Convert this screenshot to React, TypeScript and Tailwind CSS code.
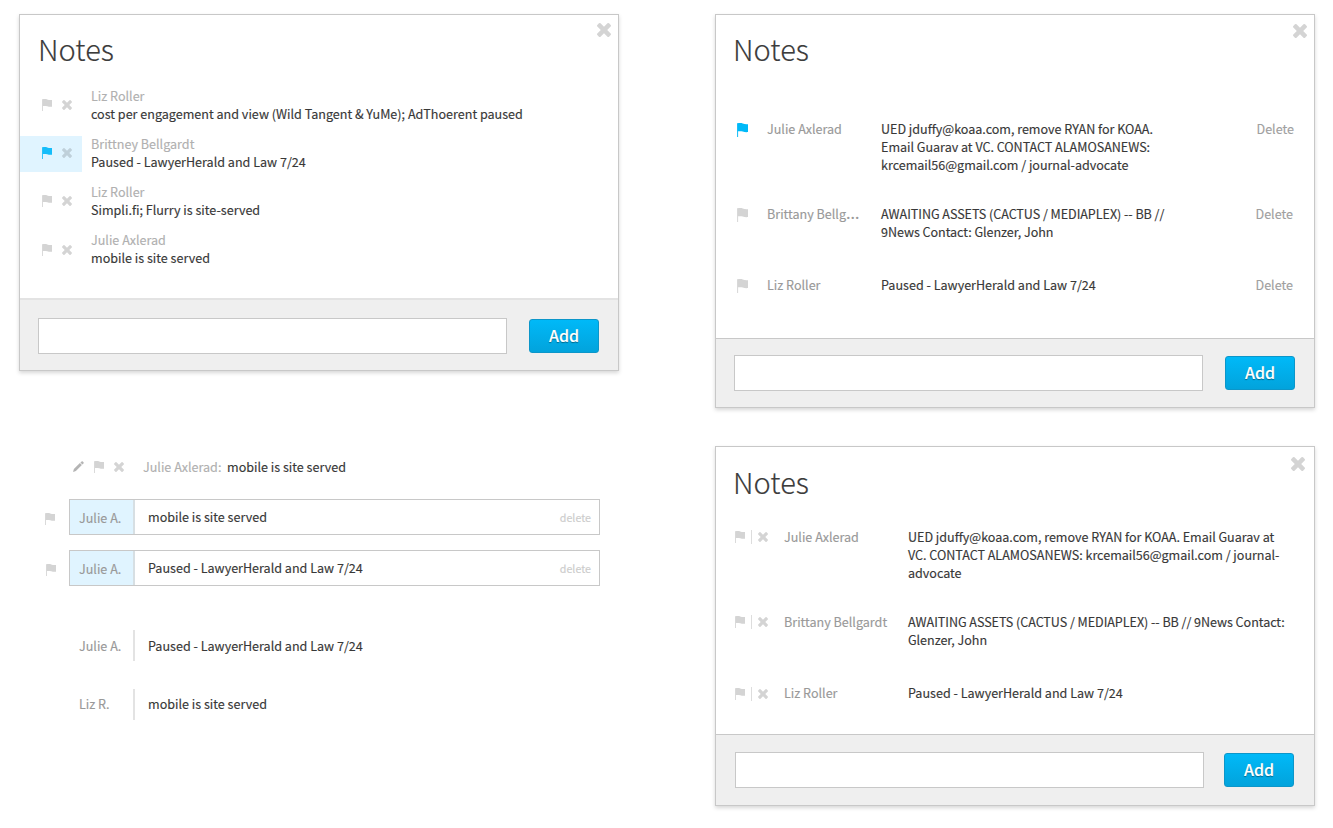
import type { ReactNode } from "react";

function Flag({ className = "h-3 w-2.5 text-[#d4d4d4]" }: { className?: string }) {
  return (
    <svg viewBox="0 0 10 12" preserveAspectRatio="none" fill="currentColor" className={`block shrink-0 ${className}`}>
      <path d="M0 0.2h1V12H0z" opacity="0.85" />
      <path d="M.6 0.300C2.400 0 4 0 5.200 .5 6.600 1 8 1.100 10 1V7.800C8 7.900 6.600 7.800 5.200 7.300 3.800 6.900 2.400 6.900 .6 7.100z" />
    </svg>
  );
}

function Cross({ className = "size-2.5 text-[#d4d4d4]" }: { className?: string }) {
  return (
    <svg viewBox="302 366 1188 1188" fill="currentColor" className={`block shrink-0 ${className}`}>
      <path d="M1490 1322q0 40-28 68l-136 136q-28 28-68 28t-68-28l-294-294-294 294q-28 28-68 28t-68-28l-136-136q-28-28-28-68t28-68l294-294-294-294q-28-28-28-68t28-68l136-136q28-28 68-28t68 28l294 294 294-294q28-28 68-28t68 28l136 136q28 28 28 68t-28 68l-294 294 294 294q28 28 28 68z" />
    </svg>
  );
}

function Pencil() {
  return (
    <svg viewBox="0 0 11 11" fill="currentColor" className="block size-[11px] shrink-0 text-[#b4b4b4]">
      <path d="M0 11 .9 8.100 6.900 2.100 8.900 4.100 2.900 10.100zM7.400 1.600 8.600.5Q9.200 0 9.800.5L10.500 1.200Q11 1.800 10.500 2.400L9.400 3.600z" />
    </svg>
  );
}

function Panel({
  className,
  titleClass,
  closeClass,
  footerClass,
  children,
}: {
  className: string;
  titleClass: string;
  closeClass: string;
  footerClass: string;
  children: ReactNode;
}) {
  return (
    <section
      className={`relative flex w-[600px] flex-col border border-[#c8c8c8] bg-white shadow-[0_2px_4px_rgba(0,0,0,0.16)] ${className}`}
    >
      <button className={`absolute ${closeClass}`} aria-label="Close">
        <Cross className="size-3.5 text-[#d4d4d4]" />
      </button>
      <h2 className={`h-10 text-[29px] leading-[36px] font-light text-[#3c3c3c] ${titleClass}`}>Notes</h2>
      {children}
      <form className={`mt-auto flex bg-[#efefef] ${footerClass}`}>
        <input className="h-9 w-[469px] border border-[#c8c8c8] bg-white px-2 outline-none" />
        <button
          type="button"
          className="mt-px ml-auto h-[34px] w-[70px] rounded-[3px] border border-[#0c96c9] bg-linear-to-b from-[#00b9f8] to-[#02a3dc] pb-0.5 text-[16px] leading-[30px] font-medium text-white [text-shadow:0_1px_1px_rgba(0,0,0,0.4)]"
        >
          Add
        </button>
      </form>
    </section>
  );
}

const compactNotes = [
  { author: "Liz Roller", text: "cost per engagement and view (Wild Tangent & YuMe); AdThoerent paused", icons: "pt-3" },
  { author: "Brittney Bellgardt", text: "Paused - LawyerHerald and Law 7/24", icons: "pt-3", flagged: true },
  { author: "Liz Roller", text: "Simpli.fi; Flurry is site-served", icons: "pt-3" },
  { author: "Julie Axlerad", text: "mobile is site served", icons: "pt-[13px]" },
];

const wideNotes = [
  {
    author: "Julie Axlerad",
    lines: ["UED jduffy@koaa.com, remove RYAN for KOAA.", "Email Guarav at VC. CONTACT ALAMOSANEWS:", "krcemail56@gmail.com / journal-advocate"],
    flag: "text-[#00b9f8]",
    row: "h-[85px] pr-5",
    textClass: "tracking-[-0.02px]",
  },
  {
    author: "Brittany Bellg",
    clipped: true,
    lines: ["AWAITING ASSETS (CACTUS / MEDIAPLEX) -- BB //", "9News Contact: Glenzer, John"],
    flag: "text-[#d4d4d4]",
    row: "h-[71px] pr-[21px]",
    textClass: "tracking-[-0.05px]",
  },
  {
    author: "Liz Roller",
    lines: ["Paused - LawyerHerald and Law 7/24"],
    flag: "text-[#d4d4d4]",
    row: "h-[18px] pr-[21px]",
    textClass: "",
  },
];

const iconNotes = [
  {
    author: "Julie Axlerad",
    lines: ["UED jduffy@koaa.com, remove RYAN for KOAA. Email Guarav at", "VC. CONTACT ALAMOSANEWS: krcemail56@gmail.com / journal-", "advocate"],
    row: "h-[85px]",
    icons: "pt-0.5",
    textClass: "tracking-[-0.02px]",
  },
  {
    author: "Brittany Bellgardt",
    lines: ["AWAITING ASSETS (CACTUS / MEDIAPLEX) -- BB // 9News Contact:", "Glenzer, John"],
    row: "h-[71px]",
    icons: "pt-0.5",
    textClass: "tracking-[-0.05px]",
  },
  { author: "Liz Roller", lines: ["Paused - LawyerHerald and Law 7/24"], row: "h-[18px]", icons: "pt-[3px]", textClass: "" },
];

function Lines({ lines, className }: { lines: string[]; className: string }) {
  return (
    <div className={`whitespace-nowrap ${className}`}>
      {lines.map((line) => (
        <p key={line}>{line}</p>
      ))}
    </div>
  );
}

export default function App() {
  return (
    <main className="flex h-[828px] w-[1333px] gap-24 overflow-hidden bg-white pt-3.5 pl-[19px] font-['Noto_Sans_CJK_SC','Source_Sans_Pro',sans-serif] text-[12.570px] leading-[18px] text-[#383838] [-webkit-text-stroke:0.14px]">
      <div className="w-[600px] shrink-0">
        <Panel
          className="h-[357px]"
          titleClass="mt-[15px] ml-[18px]"
          closeClass="top-2 right-[7px]"
          footerClass="h-[72px] border-t-2 border-[#e3e3e3] pt-[18px] pr-[19px] pl-[18px]"
        >
          <ul className="mt-[17px] flex flex-col gap-3">
            {compactNotes.map((note, i) => (
              <li key={i} className="flex h-9">
                <div
                  className={`mr-[9px] flex h-9 w-[62px] gap-[9.700px] pl-[22px] ${note.icons} ${note.flagged ? "mt-px bg-[#e0f4ff]" : ""}`}
                >
                  <Flag className={note.flagged ? "-mt-px h-3 w-2.5 text-[#15bdfa]" : "h-3 w-2.5 text-[#d4d4d4]"} />
                  <Cross className={note.flagged ? "size-2.5 text-[#bfd0da]" : "mt-px size-2.5 text-[#d4d4d4]"} />
                </div>
                <div className="whitespace-nowrap">
                  <p className="text-[#b0b0b0]">{note.author}</p>
                  <p>{note.text}</p>
                </div>
              </li>
            ))}
          </ul>
        </Panel>

        <div className="mt-[87px] flex h-[18px] items-start pl-[53.500px]">
          <div className="mt-[3px] flex w-[70.500px]">
            <Pencil />
            <Flag className="ml-[10.500px] h-3 w-2.5 text-[#d4d4d4]" />
            <Cross className="mt-px ml-[9.700px] size-2.5 text-[#d4d4d4]" />
          </div>
          <span className="w-[84px] whitespace-nowrap text-[#b0b0b0]">Julie Axlerad:</span>
          <span>mobile is site served</span>
        </div>

        <div className="mt-[23px] flex flex-col gap-[15px]">
          {[
            { text: "mobile is site served", flag: "pl-[26px]" },
            { text: "Paused - LawyerHerald and Law 7/24", flag: "pl-[27px]" },
          ].map((row) => (
            <div key={row.text} className="flex h-9">
              <div className={`w-[50px] pt-3.5 ${row.flag}`}>
                <Flag />
              </div>
              <div className="flex h-9 w-[531px] border border-[#c8c8c8]">
                <div className="w-[65px] border-r-2 border-[#d7dfe3] bg-[#e0f4ff] pt-[9px] pl-[9px] text-[#999]">Julie A.</div>
                <div className="pt-2 pl-[13px]">{row.text}</div>
                <div className="ml-auto pt-[9px] pr-2 text-[10.700px] text-[#ccc]">delete</div>
              </div>
            </div>
          ))}
        </div>

        <div className="mt-11 flex flex-col gap-7 pl-[60px]">
          {[
            { author: "Julie A.", text: "Paused - LawyerHerald and Law 7/24", pad: "pt-[7px]" },
            { author: "Liz R.", text: "mobile is site served", pad: "pt-1.5" },
          ].map((row) => (
            <div key={row.author} className="flex h-[31px]">
              <div className={`w-14 border-r-2 border-[#e3e3e3] text-[#999] ${row.pad}`}>{row.author}</div>
              <div className={`pl-[13px] ${row.pad}`}>{row.text}</div>
            </div>
          ))}
        </div>
      </div>

      <div className="w-[600px] shrink-0">
        <Panel
          className="h-[394px]"
          titleClass="mt-[15px] ml-[17px]"
          closeClass="top-[9px] right-[7px]"
          footerClass="h-[69px] border-t border-[#c8c8c8] pt-4 pr-[19px] pl-[18px]"
        >
          <div className="mt-[50px]">
            {wideNotes.map((note) => (
              <div key={note.author} className={`flex ${note.row}`}>
                <Flag className={`mt-[3px] ml-[21px] h-3.5 w-[11px] ${note.flag}`} />
                <div className="ml-[19px] w-[95px] whitespace-nowrap text-[#999]">
                  {note.author}
                  {note.clipped && <span className="font-['Noto_Sans',sans-serif] text-[17px] leading-[0]">…</span>}
                </div>
                <div className="ml-[19px]">
                  <Lines lines={note.lines} className={note.textClass} />
                </div>
                <div className="ml-auto text-[#a0a0a0]">Delete</div>
              </div>
            ))}
          </div>
        </Panel>

        <Panel
          className="mt-[38px] h-[360px]"
          titleClass="mt-4 ml-[17px]"
          closeClass="top-2.5 right-[9px]"
          footerClass="h-[71px] border-t border-[#c8c8c8] pt-[17px] pr-5 pl-[19px]"
        >
          <div className="mt-[25px]">
            {iconNotes.map((note) => (
              <div key={note.author} className={`flex ${note.row}`}>
                <div className={`flex w-[68px] shrink-0 pl-[19px] ${note.icons}`}>
                  <Flag className="mt-px h-3 w-2.5 text-[#d4d4d4]" />
                  <div className="mr-1.5 ml-1.5 h-3.5 w-px bg-[#ddd]" />
                  <Cross className="mt-0.5 size-2.5 text-[#d4d4d4]" />
                </div>
                <div className="w-[124px] shrink-0 whitespace-nowrap text-[#999]">{note.author}</div>
                <Lines lines={note.lines} className={note.textClass} />
              </div>
            ))}
          </div>
        </Panel>
      </div>
    </main>
  );
}
